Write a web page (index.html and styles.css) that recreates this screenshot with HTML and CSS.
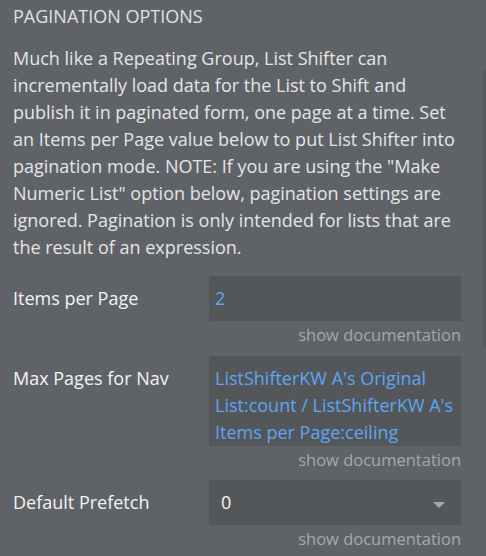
FILE: index.html
```html
<!DOCTYPE html>
<html>
<head>
<meta charset="utf-8">
<link rel="stylesheet" href="styles.css">
</head>
<body>
<div class="panel">
  <div class="title">PAGINATION OPTIONS</div>
  <p class="desc">Much like a Repeating Group, List Shifter can incrementally load data for the List to Shift and publish it in paginated form, one page at a time. Set an Items per Page value below to put List Shifter into pagination mode. NOTE: If you are using the "Make Numeric List" option below, pagination settings are ignored. Pagination is only intended for lists that are the result of an expression.</p>

  <div class="row">
    <div class="label">Items per Page</div>
    <div class="field">
      <div class="input">2</div>
      <div class="doc">show documentation</div>
    </div>
  </div>

  <div class="row">
    <div class="label">Max Pages for Nav</div>
    <div class="field">
      <div class="input tall">ListShifterKW A's Original List:count / ListShifterKW A's Items per Page:ceiling</div>
      <div class="doc">show documentation</div>
    </div>
  </div>

  <div class="row">
    <div class="label">Default Prefetch</div>
    <div class="field">
      <div class="select"><span>0</span><span class="caret"></span></div>
      <div class="doc">show documentation</div>
    </div>
  </div>
  <div class="scrollbar"></div>
</div>
</body>
</html>
```

FILE: styles.css
```css
html, body {
  margin: 0;
  padding: 0;
  background: #5f6367;
}
body {
  width: 486px;
  height: 556px;
  overflow: hidden;
  font-family: "Open Sans", "Noto Sans", sans-serif;
  font-size: 18px;
  line-height: 27px;
  color: #e4e5e6;
}
.panel {
  position: relative;
  height: 556px;
  padding: 3px 25px 0 13px;
  box-sizing: border-box;
}
.title {
  color: #e0e1e2;
}
.desc {
  margin: 15px 0 15px 0;
  color: #e4e5e6;
}
.row {
  display: flex;
  margin-bottom: 7.5px;
}
.label {
  width: 196px;
  flex: none;
  padding-top: 9px;
  color: #f4f4f4;
}
.field {
  flex: 1;
  display: flex;
  flex-direction: column;
}
.input {
  background: #53575a;
  height: 45px;
  box-sizing: border-box;
  padding: 9px 6px 0 6px;
  color: #5fa5f2;
}
.input.tall {
  height: 90px;
  padding-right: 2px;
}
.select {
  background: #53575a;
  height: 45px;
  box-sizing: border-box;
  padding: 9px 16px 0 12px;
  display: flex;
  justify-content: space-between;
  align-items: flex-start;
  color: #f4f4f4;
}
.caret {
  width: 0;
  height: 0;
  margin-top: 13px;
  border-left: 6px solid transparent;
  border-right: 6px solid transparent;
  border-top: 6px solid #a6a9ac;
}
.doc {
  text-align: right;
  font-size: 16.5px;
  color: #a6a8aa;
}
.scrollbar {
  position: absolute;
  right: 0;
  top: 70px;
  width: 3px;
  height: 277px;
  background: #56595d;
}
```
